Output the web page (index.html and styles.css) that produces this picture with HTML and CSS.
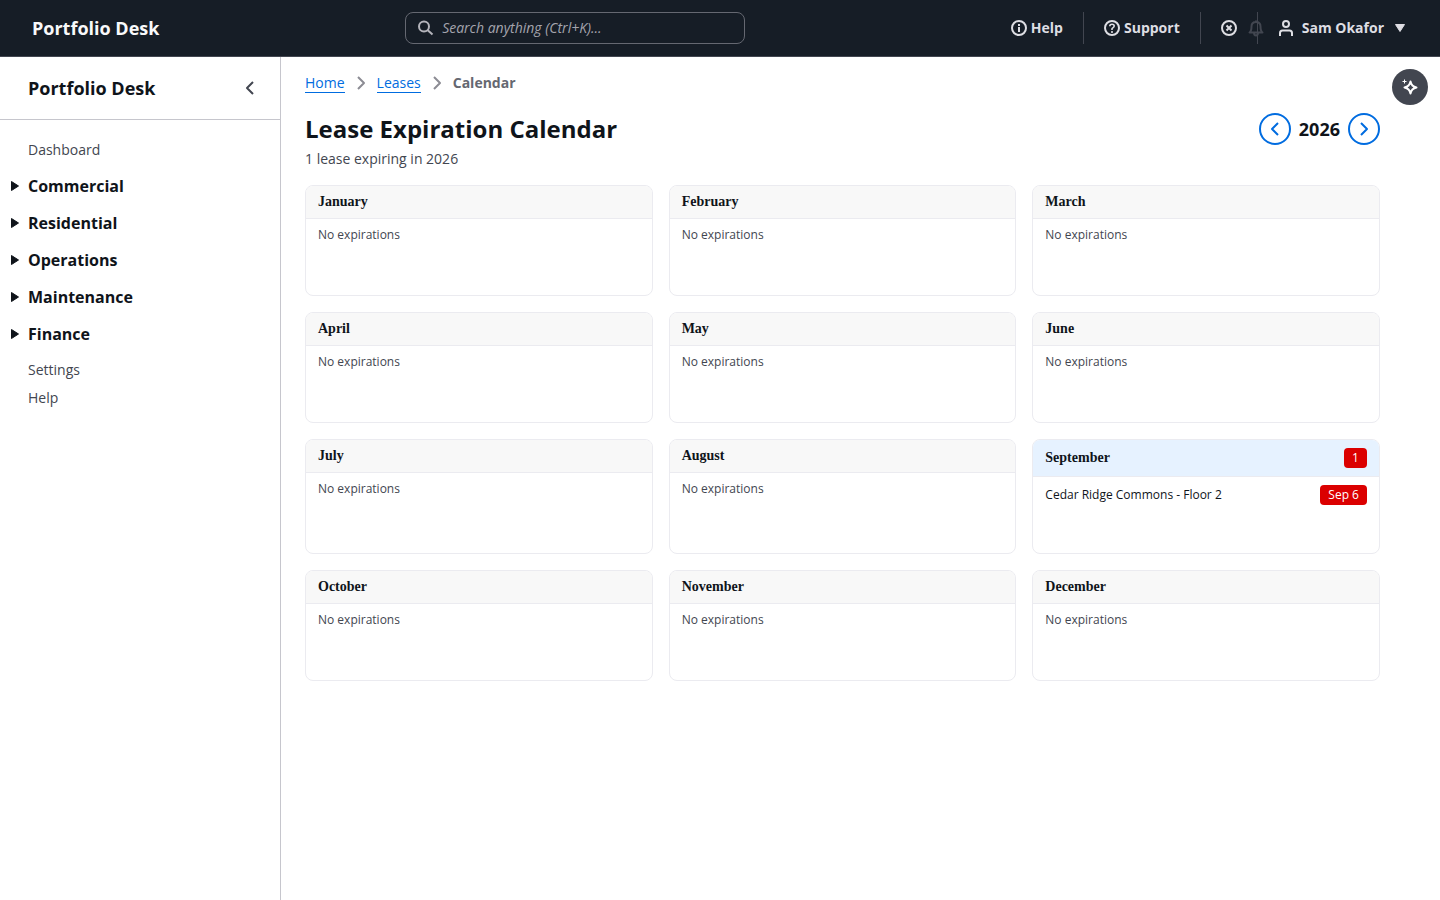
FILE: index.html
```html
<!DOCTYPE html>
<html lang="en">
<head>
    <meta charset="UTF-8">
    <meta name="viewport" content="width=device-width, initial-scale=1.0">
    <title>Lease Expiration Calendar - Portfolio Desk</title>
    <link rel="stylesheet" href="styles.css">
</head>
<body>
    <header class="top-nav">
        <a href="#" class="brand">Portfolio Desk</a>
        <div class="search-area">
            <div class="search">
                <svg class="icon" viewBox="0 0 16 16"><circle cx="6" cy="6.5" r="5"/><path d="m14.500 14.500-5-4.500"/></svg>
                <input type="search" aria-label="Search" placeholder="Search anything (Ctrl+K)...">
            </div>
        </div>
        <nav class="utilities">
            <button type="button" class="utility">
                <svg class="icon" viewBox="0 0 16 16"><circle cx="8" cy="8" r="7"/><path d="M8 12V7M8 6V4"/></svg>
                Help
            </button>
            <button type="button" class="utility">
                <svg class="icon" viewBox="0 0 16 16"><circle cx="8" cy="8" r="7"/><path class="thin" d="M8 10V8.800c0-.9 2.200-1 2.200-2.700C10.200 4.900 9.300 4.200 8 4.200S5.800 4.900 5.800 6.200M8 11v2"/></svg>
                Support
            </button>
            <button type="button" class="utility" aria-label="Notifications">
                <svg class="icon" viewBox="0 0 16 16"><circle cx="8" cy="8" r="7"/><path d="m5.500 5.500 5 5M10.500 5.500l-5 5"/></svg>
                <svg class="icon bell" viewBox="0 0 16 16"><path d="M1.500 12.500h13c-1.500-1-2-2-2-6C12.500 3.500 10.500 2 8 2S3.500 3.500 3.500 6.500c0 4-.5 5-2 6ZM8 2V.5M6 12.500c0 2 .8 3 2 3s2-1 2-3"/></svg>
            </button>
            <button type="button" class="utility user">
                <svg class="icon" viewBox="0 0 16 16"><circle cx="8" cy="4" r="3"/><path d="M2 16v-3c0-1.500 1-2.500 2.500-2.500h7c1.500 0 2.500 1 2.500 2.500v3"/></svg>
                Sam Okafor
                <svg class="icon caret" viewBox="0 0 16 16"><path d="M3.500 4.500h9L8 11.500z"/></svg>
            </button>
        </nav>
    </header>

    <div class="layout">
        <aside class="sidebar">
            <div class="sidebar-header">
                <a href="#">Portfolio Desk</a>
                <button type="button" class="icon-button" aria-label="Close navigation">
                    <svg class="icon" viewBox="0 0 16 16"><path d="M11 2 5 8l6 6"/></svg>
                </button>
            </div>
            <nav class="side-nav">
                <a href="#">Dashboard</a>
                <div class="sections">
                    <button type="button" class="section"><svg class="icon caret" viewBox="0 0 16 16"><path d="M4.500 3.500v9l7-4.500z"/></svg>Commercial</button>
                    <button type="button" class="section"><svg class="icon caret" viewBox="0 0 16 16"><path d="M4.500 3.500v9l7-4.500z"/></svg>Residential</button>
                    <button type="button" class="section"><svg class="icon caret" viewBox="0 0 16 16"><path d="M4.500 3.500v9l7-4.500z"/></svg>Operations</button>
                    <button type="button" class="section"><svg class="icon caret" viewBox="0 0 16 16"><path d="M4.500 3.500v9l7-4.500z"/></svg>Maintenance</button>
                    <button type="button" class="section"><svg class="icon caret" viewBox="0 0 16 16"><path d="M4.500 3.500v9l7-4.500z"/></svg>Finance</button>
                </div>
                <a href="#">Settings</a>
                <a href="#">Help</a>
            </nav>
        </aside>

        <main class="content">
            <nav class="breadcrumbs" aria-label="Breadcrumbs">
                <a href="#">Home</a>
                <svg class="icon" viewBox="0 0 16 16"><path d="m5 2 6 6-6 6"/></svg>
                <a href="#">Leases</a>
                <svg class="icon" viewBox="0 0 16 16"><path d="m5 2 6 6-6 6"/></svg>
                <span>Calendar</span>
            </nav>

            <div class="page-header">
                <h1>Lease Expiration Calendar</h1>
                <div class="year-picker">
                    <button type="button" class="round" aria-label="Previous year"><svg class="icon" viewBox="0 0 16 16"><path d="M11 2 5 8l6 6"/></svg></button>
                    <strong>2026</strong>
                    <button type="button" class="round" aria-label="Next year"><svg class="icon" viewBox="0 0 16 16"><path d="m5 2 6 6-6 6"/></svg></button>
                </div>
            </div>
            <p class="description">1 lease expiring in 2026</p>

            <div class="calendar">
                <section class="month">
                    <h2>January</h2>
                    <div class="month-body">No expirations</div>
                </section>
                <section class="month">
                    <h2>February</h2>
                    <div class="month-body">No expirations</div>
                </section>
                <section class="month">
                    <h2>March</h2>
                    <div class="month-body">No expirations</div>
                </section>
                <section class="month">
                    <h2>April</h2>
                    <div class="month-body">No expirations</div>
                </section>
                <section class="month">
                    <h2>May</h2>
                    <div class="month-body">No expirations</div>
                </section>
                <section class="month">
                    <h2>June</h2>
                    <div class="month-body">No expirations</div>
                </section>
                <section class="month">
                    <h2>July</h2>
                    <div class="month-body">No expirations</div>
                </section>
                <section class="month">
                    <h2>August</h2>
                    <div class="month-body">No expirations</div>
                </section>
                <section class="month active">
                    <h2>September <span class="badge">1</span></h2>
                    <div class="month-body">
                        <div class="lease">Cedar Ridge Commons - Floor 2 <span class="badge">Sep 6</span></div>
                    </div>
                </section>
                <section class="month">
                    <h2>October</h2>
                    <div class="month-body">No expirations</div>
                </section>
                <section class="month">
                    <h2>November</h2>
                    <div class="month-body">No expirations</div>
                </section>
                <section class="month">
                    <h2>December</h2>
                    <div class="month-body">No expirations</div>
                </section>
            </div>
        </main>

        <aside class="tools">
            <button type="button" class="assistant" aria-label="Open assistant">
                <svg class="icon" viewBox="0 0 16 16"><path d="M8.500 2.500c.7 3.800 2.200 5.300 6 6-3.800.7-5.300 2.200-6 6-.7-3.800-2.200-5.300-6-6 3.800-.7 5.300-2.200 6-6z"/><path class="spark" d="M2.500.5v4M.5 2.500h4"/></svg>
            </button>
        </aside>
    </div>
</body>
</html>
```
FILE: styles.css
```css
* {
    box-sizing: border-box;
}
body {
    margin: 0;
    min-height: 100vh;
    display: flex;
    flex-direction: column;
    font-family: "Open Sans", sans-serif;
    font-size: 14px;
    line-height: 20px;
    color: #0f141a;
    background: #fff;
}
a {
    color: inherit;
    text-decoration: none;
}
button {
    display: flex;
    align-items: center;
    padding: 0;
    border: none;
    background: none;
    font: inherit;
    color: inherit;
    cursor: pointer;
}
.icon {
    width: 16px;
    height: 16px;
    flex: none;
    fill: none;
    stroke: currentColor;
    stroke-width: 2;
    stroke-linejoin: round;
    overflow: visible;
}
.caret {
    fill: currentColor;
    stroke-width: 1;
}
.thin {
    stroke-width: 1.6;
}

/* top navigation */
.top-nav {
    display: flex;
    align-items: center;
    height: 57px;
    padding: 0 32px;
    background: #161d26;
    border-bottom: 1px solid #424650;
    color: #dedee3;
}
.brand {
    font-size: 18px;
    font-weight: 700;
    color: #f9f9fa;
}
.search-area {
    flex: 1;
    display: flex;
    justify-content: center;
}
.search {
    display: flex;
    align-items: center;
    gap: 8px;
    width: 340px;
    height: 32px;
    padding: 0 12px;
    border: 1px solid #656871;
    border-radius: 8px;
    color: #b4b4bb;
}
.search input {
    flex: 1;
    min-width: 0;
    padding: 0;
    border: none;
    outline: none;
    background: none;
    font: inherit;
    color: #dedee3;
}
.search input::placeholder {
    color: #a4a4ad;
    font-style: italic;
}
.utilities {
    display: flex;
}
.utility {
    position: relative;
    gap: 4px;
    height: 32px;
    padding: 0 20px;
    border-right: 1px solid #424650;
    font-weight: 700;
}
.utility.user {
    gap: 8px;
    padding-right: 0;
    border-right: none;
}
.bell {
    position: absolute;
    top: 8px;
    right: -7px;
    color: #424650;
}

/* side navigation */
.layout {
    flex: 1;
    display: flex;
}
.sidebar {
    flex: none;
    width: 281px;
    border-right: 1px solid #c6c6cd;
}
.sidebar-header {
    display: flex;
    align-items: center;
    justify-content: space-between;
    height: 63px;
    padding: 0 22px 0 28px;
    border-bottom: 1px solid #c6c6cd;
    font-size: 18px;
    font-weight: 700;
}
.icon-button {
    color: #424650;
}
.side-nav {
    display: flex;
    flex-direction: column;
    gap: 8px;
    padding: 20px 28px 20px 7px;
    color: #424650;
}
.side-nav a {
    padding-left: 21px;
}
.sections {
    display: flex;
    flex-direction: column;
    gap: 9px;
    margin: 4px 0;
}
.section {
    gap: 5px;
    padding: 4px 0;
    font-size: 16px;
    font-weight: 700;
    color: #0f141a;
}

/* page */
.content {
    flex: 1;
    min-width: 0;
    padding: 16px 0 24px 24px;
}
.breadcrumbs {
    display: flex;
    align-items: center;
    gap: 8px;
    color: #656871;
    font-weight: 700;
}
.breadcrumbs a {
    color: #006ce0;
    font-weight: 400;
    line-height: 19px;
    border-bottom: 1px solid #006ce0;
}
.breadcrumbs .icon {
    color: #8c8c94;
}
.page-header {
    display: flex;
    align-items: center;
    justify-content: space-between;
    margin-top: 20px;
}
h1 {
    margin: 0;
    font-size: 24px;
    line-height: 30px;
}
.year-picker {
    display: flex;
    align-items: center;
    gap: 8px;
    font-size: 18px;
}
.round {
    justify-content: center;
    width: 32px;
    height: 32px;
    border: 2px solid #006ce0;
    border-radius: 50%;
    color: #006ce0;
}
.description {
    margin: 4px 0 16px;
    color: #424650;
}
.calendar {
    display: grid;
    grid-template-columns: repeat(3, 1fr);
    gap: 16px;
}
.month {
    border: 1px solid #ebebf0;
    border-radius: 8px;
    overflow: hidden;
}
.month h2 {
    display: flex;
    align-items: center;
    justify-content: space-between;
    margin: 0;
    padding: 8px 12px;
    background: #f8f8f8;
    border-bottom: 1px solid #ebebf0;
    font-family: "Liberation Serif", serif;
    font-size: 14px;
    line-height: 16px;
}
.month.active h2 {
    background: #e6f2ff;
}
.month-body {
    min-height: 76px;
    padding: 8px 12px;
    font-size: 12px;
    line-height: 16px;
    color: #424650;
}
.lease {
    display: flex;
    align-items: center;
    justify-content: space-between;
    color: #0f141a;
}
.badge {
    padding: 2px 8px;
    border-radius: 4px;
    background: #db0000;
    color: #fff;
    font-family: "Open Sans", sans-serif;
    font-size: 12px;
    font-weight: 400;
}
.tools {
    flex: none;
    width: 60px;
    padding: 12px;
}
.assistant {
    justify-content: center;
    width: 36px;
    height: 36px;
    border-radius: 50%;
    background: #424650;
    color: #fff;
}
.spark {
    stroke-width: 1;
}
```
